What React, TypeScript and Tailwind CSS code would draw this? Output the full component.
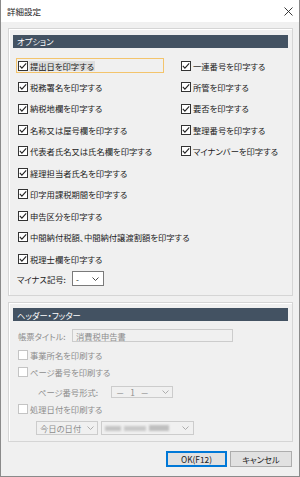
import React from "react";

const leftItems = [
  "提出日を印字する",
  "税務署名を印字する",
  "納税地欄を印字する",
  "名称又は屋号欄を印字する",
  "代表者氏名又は氏名欄を印字する",
  "経理担当者氏名を印字する",
  "印字用課税期間を印字する",
  "申告区分を印字する",
  "中間納付税額、中間納付譲渡割額を印字する",
  "税理士欄を印字する",
];

const rightItems = [
  "一連番号を印字する",
  "所管を印字する",
  "要否を印字する",
  "整理番号を印字する",
  "マイナンバーを印字する",
];

function Box({ checked, disabled }: { checked?: boolean; disabled?: boolean }) {
  return (
    <span
      className={`flex h-[10px] w-[10px] shrink-0 items-center justify-center border bg-white ${
        disabled ? "border-[#c4c4c4]" : "border-[#333]"
      }`}
    >
      {checked && (
        <svg width="8" height="8" viewBox="0 0 8 8">
          <polyline points="0.8,3.9 2.9,6.1 7.2,1.3" fill="none" stroke="#222" strokeWidth="1.1" />
        </svg>
      )}
    </span>
  );
}

function Chevron({ color = "#333" }: { color?: string }) {
  return (
    <svg width="7" height="4" viewBox="0 0 7 4" className="shrink-0">
      <polyline points="0.5,0.5 3.5,3.5 6.5,0.5" fill="none" stroke={color} strokeWidth="0.9" />
    </svg>
  );
}

function Header({ label }: { label: string }) {
  return (
    <div className="flex h-[13px] items-center bg-[#435262] pl-[4px] text-white">{label}</div>
  );
}

export default function App() {
  return (
    <div
      className="flex h-[477px] w-[300px] flex-col border-x border-b border-[#8a8a8a] bg-[#f0f0f0] text-[8.3px] leading-none text-[#1b1b1b] [font-feature-settings:'palt']"
      style={{ fontFamily: '"Noto Sans CJK JP", "Noto Sans", sans-serif' }}
    >
      <div className="flex h-[22px] items-center justify-between bg-white pl-[6px] pr-[6px]">
        <span className="text-[8.5px]">詳細設定</span>
        <svg width="9" height="9" viewBox="0 0 9 9">
          <path d="M0.5 0.5 L8.5 8.5 M8.5 0.5 L0.5 8.5" stroke="#222" strokeWidth="0.9" />
        </svg>
      </div>

      <div className="ml-[7px] mt-[6px] w-[285px] border border-[#d5d5d5] px-[4px] pb-[9px] pt-[6px] shadow-[inset_1px_1px_0_#fff]">
        <Header label="オプション" />
        <div className="mt-[7px] flex flex-col pl-[3px]">
          {leftItems.map((t, i) => (
            <div key={t} className="flex h-[21.44px] items-center">
              <div
                className={`flex h-[15px] w-[148px] items-center border ${
                  i === 0 ? "border-[#f3c46c]" : "border-transparent"
                }`}
              >
                <span className="ml-[1px]">
                  <Box checked />
                </span>
                <span
                  className={`ml-[1px] whitespace-nowrap px-[1px] py-[1px] ${i === 0 ? "bg-[#dedede]" : ""}`}
                >
                  {t}
                </span>
              </div>
              {rightItems[i] && (
                <div className="ml-[16px] flex items-center">
                  <span className="ml-[1px]">
                    <Box checked />
                  </span>
                  <span className="ml-[2px] whitespace-nowrap">{rightItems[i]}</span>
                </div>
              )}
            </div>
          ))}
          <div className="mt-[2px] flex h-[15px] items-center">
            <span className="ml-[1px] w-[55px]">マイナス記号:</span>
            <div className="flex h-[15px] w-[32px] items-center justify-between border border-[#7a7a7a] bg-white pl-[3px] pr-[4px]">
              <span>-</span>
              <Chevron />
            </div>
          </div>
        </div>
      </div>

      <div className="ml-[7px] mt-[6px] w-[285px] border border-[#d5d5d5] px-[4px] pb-[6px] pt-[5px] shadow-[inset_1px_1px_0_#fff]">
        <Header label="ヘッダー・フッター" />
        <div className="mt-[8px] flex h-[13px] items-center text-[#8d8d8d]">
          <span className="ml-[5px] w-[54px]">帳票タイトル:</span>
          <div className="flex h-[13px] w-[161px] items-center border border-[#cccccc] bg-[#f0f0f0] pl-[3px]">
            消費税申告書
          </div>
        </div>
        <div className="mt-[6px] flex h-[14px] items-center text-[#8d8d8d]">
          <span className="ml-[5px]">
            <Box disabled />
          </span>
          <span className="ml-[2px]">事業所名を印刷する</span>
        </div>
        <div className="mt-[3px] flex h-[14px] items-center text-[#8d8d8d]">
          <span className="ml-[5px]">
            <Box disabled />
          </span>
          <span className="ml-[2px]">ページ番号を印刷する</span>
        </div>
        <div className="mt-[7px] flex h-[12px] items-center text-[#8d8d8d]">
          <span className="ml-[25px] w-[73px]">ページ番号形式:</span>
          <div className="flex h-[12px] w-[62px] items-center justify-between border border-[#cccccc] bg-[#f0f0f0] pl-[4px] pr-[3px]">
            <span className="tracking-[2px]">－ 1 －</span>
            <Chevron color="#a5a5a5" />
          </div>
        </div>
        <div className="mt-[4px] flex h-[14px] items-center text-[#8d8d8d]">
          <span className="ml-[5px]">
            <Box disabled />
          </span>
          <span className="ml-[2px]">処理日付を印刷する</span>
        </div>
        <div className="mt-[5px] flex h-[14px] items-center gap-[3px] pl-[23px] text-[#8d8d8d]">
          <div className="flex h-[14px] w-[62px] items-center justify-between border border-[#cccccc] bg-[#f0f0f0] pl-[3px] pr-[3px]">
            <span>今日の日付</span>
            <Chevron color="#a5a5a5" />
          </div>
          <div className="flex h-[14px] w-[93px] items-center justify-between border border-[#cccccc] bg-[#f0f0f0] pl-[3px] pr-[4px]">
            <div className="flex items-center gap-[3px] blur-[1px]">
              <span className="h-[5px] w-[16px] bg-[#c4c4c4]" />
              <span className="h-[5px] w-[22px] bg-[#c9c9c9]" />
              <span className="h-[6px] w-[20px] bg-[#bfbfbf]" />
            </div>
            <Chevron color="#a5a5a5" />
          </div>
        </div>
      </div>

      <div className="mr-[7px] mt-[9px] flex justify-end gap-[3px]">
        <button
          type="button"
          className="flex h-[16px] w-[61px] items-center justify-center border border-[#0078d7] bg-[#e1e1e1] shadow-[inset_0_0_0_1px_#0078d7]"
        >
          OK(F12)
        </button>
        <button
          type="button"
          className="flex h-[16px] w-[62px] items-center justify-center border border-[#adadad] bg-[#e1e1e1]"
        >
          キャンセル
        </button>
      </div>
    </div>
  );
}
